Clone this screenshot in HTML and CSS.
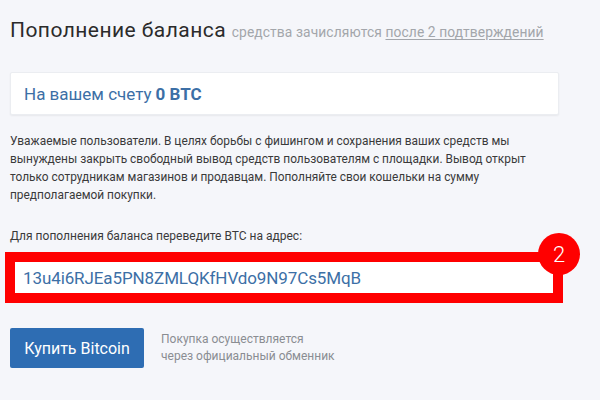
FILE: index.html
```html
<!DOCTYPE html>
<html lang="ru">
<head>
<meta charset="utf-8">
<link rel="stylesheet" href="styles.css">
</head>
<body>
<div class="page">
  <h1 class="title">Пополнение баланса <span class="subtitle">средства зачисляются <span class="link">после 2 подтверждений</span></span></h1>
  <div class="card">На вашем счету <b>0 BTC</b></div>
  <p class="notice">Уважаемые пользователи. В целях борьбы с фишингом и сохранения ваших средств мы вынуждены закрыть свободный вывод средств пользователям с площадки. Вывод открыт только сотрудникам магазинов и продавцам. Пополняйте свои кошельки на сумму предполагаемой покупки.</p>
  <p class="label">Для пополнения баланса переведите BTC на адрес:</p>
  <div class="addr-wrap">
    <div class="addr">13u4i6RJEa5PN8ZMLQKfHVdo9N97Cs5MqB</div>
    <span class="badge">2</span>
  </div>
  <div class="buy">
    <button class="btn">Купить Bitcoin</button>
    <div class="buy-note">Покупка осуществляется<br>через официальный обменник</div>
  </div>
</div>
</body>
</html>
```
FILE: styles.css
```css
html, body {
  margin: 0;
  padding: 0;
  background: #f5f6fa;
}
body {
  font-family: Roboto, "Noto Sans", sans-serif;
  color: #333;
  width: 600px;
  height: 400px;
  overflow: hidden;
}
.page {
  padding: 0 41px 0 10px;
}
.title {
  margin: 0;
  padding-top: 17px;
  font-size: 21px;
  font-weight: 400;
  line-height: 26px;
  color: #2b2b2b;
  letter-spacing: 0.45px;
}
.subtitle {
  font-size: 13.8px;
  color: #a3a6ab;
  letter-spacing: 0.1px;
}
.link {
  text-decoration: underline;
  text-underline-offset: 2px;
}
.card {
  margin-top: 27px;
  height: 43px;
  box-sizing: border-box;
  background: #fff;
  border: 1px solid #ebedf1;
  border-radius: 2px;
  box-shadow: 0 1px 2px rgba(0,0,0,0.06);
  padding: 0 13px;
  display: flex;
  align-items: center;
  font-size: 17px;
  color: #3c6fa6;
}
.card b {
  font-weight: 700;
  margin-left: 4px;
}
.notice {
  margin: 17px 0 0;
  padding-right: 20px;
  font-size: 11.9px;
  line-height: 18px;
  color: #3a3a3a;
}
.label {
  margin: 23px 0 0;
  font-size: 12px;
  line-height: 18px;
  color: #3a3a3a;
}
.addr-wrap {
  position: relative;
  margin: 7px 0 0 -5px;
  width: 558px;
}
.addr {
  border: 10px solid #ff0000;
  background: #fff;
  height: 31px;
  padding-left: 8px;
  display: flex;
  align-items: center;
  font-size: 17px;
  letter-spacing: -0.1px;
  color: #3c6fa6;
}
.badge {
  position: absolute;
  left: 533px;
  top: -19px;
  width: 42px;
  height: 42px;
  border-radius: 50%;
  background: #ff0000;
  color: #fff;
  font-size: 22px;
  font-weight: 300;
  display: flex;
  align-items: center;
  justify-content: center;
}
.buy {
  margin-top: 25px;
  display: flex;
  align-items: center;
  gap: 17px;
}
.btn {
  width: 134px;
  height: 40px;
  border: 0;
  border-radius: 2px;
  background: #2e6db3;
  color: #fff;
  font-family: inherit;
  font-size: 16px;
  padding: 0;
}
.buy-note {
  font-size: 12px;
  line-height: 17px;
  color: #8a8d92;
}
```
